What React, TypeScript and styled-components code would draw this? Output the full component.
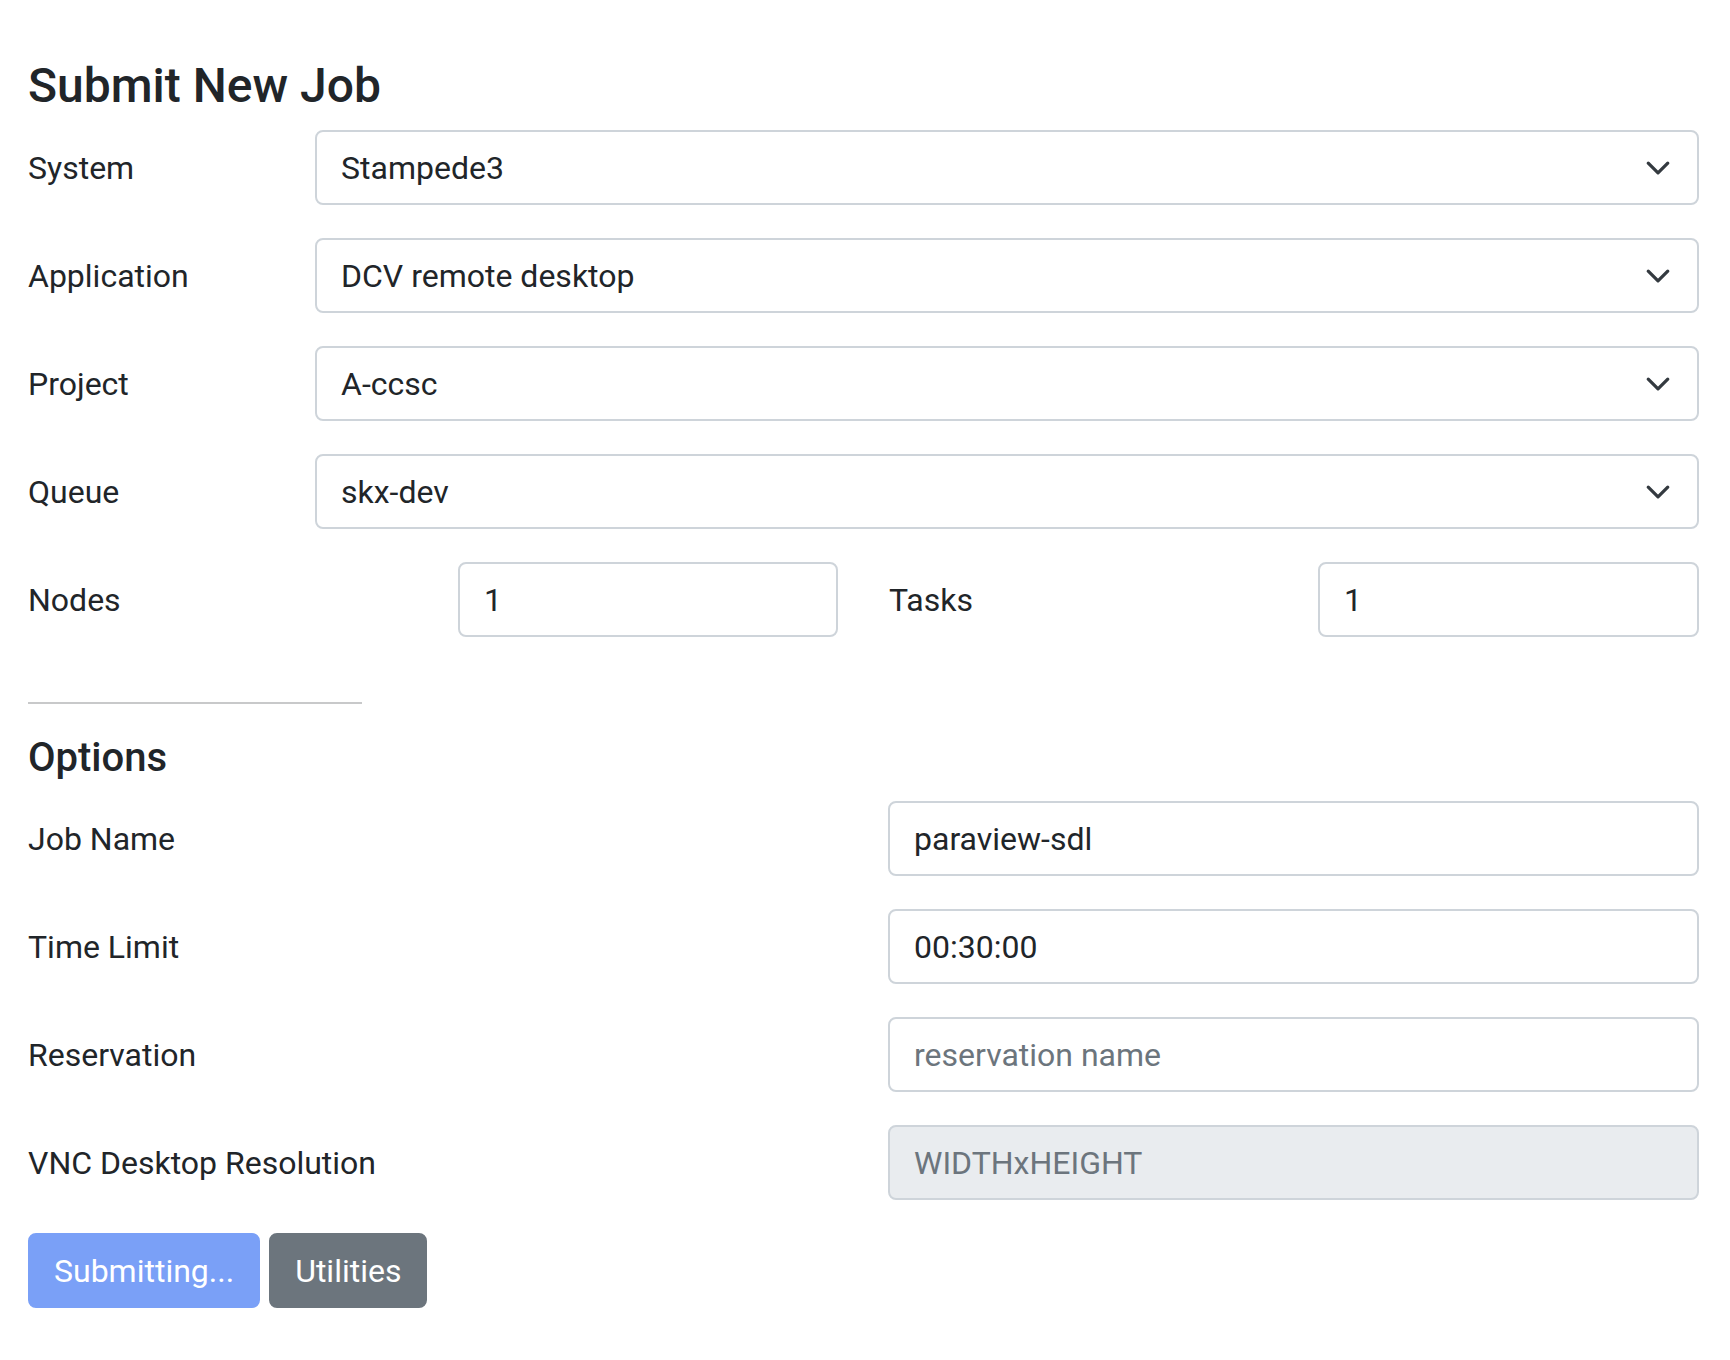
import React from 'react';
import styled, { createGlobalStyle } from 'styled-components';

const GlobalStyle = createGlobalStyle`
  body {
    margin: 0;
    background: #ffffff;
    color: #212529;
    font-family: Roboto, "Liberation Sans", Arial, sans-serif;
  }
  * {
    box-sizing: border-box;
  }
`;

const Page = styled.div`
  padding: 57px 31px 52px 28px;
`;

const Title = styled.h3`
  margin: 0 0 15px;
  font-size: 48px;
  font-weight: 500;
  line-height: 58px;
`;

const SectionTitle = styled.h4`
  margin: 0 0 19px;
  font-size: 40px;
  font-weight: 500;
  line-height: 48px;
`;

const Divider = styled.hr`
  width: 334px;
  margin: 65px 0 30px;
  border: 0;
  border-top: 2px solid #c8c9ca;
`;

const FieldRow = styled.div<{ $columns: string; $spaced?: boolean }>`
  display: grid;
  grid-template-columns: ${(p) => p.$columns};
  align-items: center;
  margin-bottom: ${(p) => (p.$spaced === false ? '0' : '33px')};
`;

const SplitRow = styled.div`
  display: grid;
  grid-template-columns: 1fr 1fr;
  column-gap: 51px;
  margin-bottom: 33px;
`;

const Label = styled.label`
  font-size: 32px;
  line-height: 1.5;
`;

const Select = styled.div`
  display: flex;
  align-items: center;
  justify-content: space-between;
  height: 75px;
  padding: 0 26px 0 24px;
  border: 2px solid #ced4da;
  border-radius: 8px;
  font-size: 32px;
  line-height: 1.5;
  background: #ffffff;
  cursor: pointer;
`;

const Input = styled.input`
  display: block;
  width: 100%;
  height: 75px;
  padding: 0 24px;
  border: 2px solid #ced4da;
  border-radius: 8px;
  font-family: inherit;
  font-size: 32px;
  line-height: 1.5;
  color: #212529;
  background: #ffffff;
  outline: none;
  &::placeholder {
    color: #6c757d;
    opacity: 1;
  }
  &:disabled {
    background: #e9ecef;
    opacity: 1;
  }
`;

const ButtonBar = styled.div`
  display: flex;
  gap: 9px;
`;

const Button = styled.button<{ $variant: 'primary' | 'secondary' }>`
  height: 75px;
  padding: 0 24px;
  border: 2px solid ${(p) => (p.$variant === 'primary' ? '#7aa0f7' : '#6c757d')};
  border-radius: 8px;
  background: ${(p) => (p.$variant === 'primary' ? '#7aa0f7' : '#6c757d')};
  color: #ffffff;
  font-family: inherit;
  font-size: 32px;
  line-height: 1.5;
  cursor: ${(p) => (p.$variant === 'primary' ? 'default' : 'pointer')};
`;

function Chevron(): JSX.Element {
  return (
    <svg width="26" height="26" viewBox="0 0 16 16" fill="none">
      <path d="m2 5 6 6 6-6" stroke="#343a40" strokeWidth="2" strokeLinecap="round" strokeLinejoin="round" />
    </svg>
  );
}

const selects = [
  { label: 'System', value: 'Stampede3' },
  { label: 'Application', value: 'DCV remote desktop' },
  { label: 'Project', value: 'A-ccsc' },
  { label: 'Queue', value: 'skx-dev' },
];

const options = [
  { label: 'Job Name', value: 'paraview-sdl' },
  { label: 'Time Limit', value: '00:30:00' },
  { label: 'Reservation', placeholder: 'reservation name' },
  { label: 'VNC Desktop Resolution', placeholder: 'WIDTHxHEIGHT', disabled: true },
];

export default function App(): JSX.Element {
  return (
    <>
      <GlobalStyle />
      <Page>
        <Title>Submit New Job</Title>
        {selects.map((s) => (
          <FieldRow key={s.label} $columns="287px 1fr">
            <Label>{s.label}</Label>
            <Select role="combobox">
              <span>{s.value}</span>
              <Chevron />
            </Select>
          </FieldRow>
        ))}
        <SplitRow>
          <FieldRow $columns="430px 1fr" $spaced={false}>
            <Label>Nodes</Label>
            <Input type="text" defaultValue="1" />
          </FieldRow>
          <FieldRow $columns="429px 1fr" $spaced={false}>
            <Label>Tasks</Label>
            <Input type="text" defaultValue="1" />
          </FieldRow>
        </SplitRow>
        <Divider />
        <SectionTitle>Options</SectionTitle>
        {options.map((o) => (
          <FieldRow key={o.label} $columns="860px 1fr">
            <Label>{o.label}</Label>
            <Input
              type="text"
              defaultValue={o.value}
              placeholder={o.placeholder}
              disabled={o.disabled}
            />
          </FieldRow>
        ))}
        <ButtonBar>
          <Button $variant="primary" disabled>
            Submitting...
          </Button>
          <Button $variant="secondary">Utilities</Button>
        </ButtonBar>
      </Page>
    </>
  );
}
